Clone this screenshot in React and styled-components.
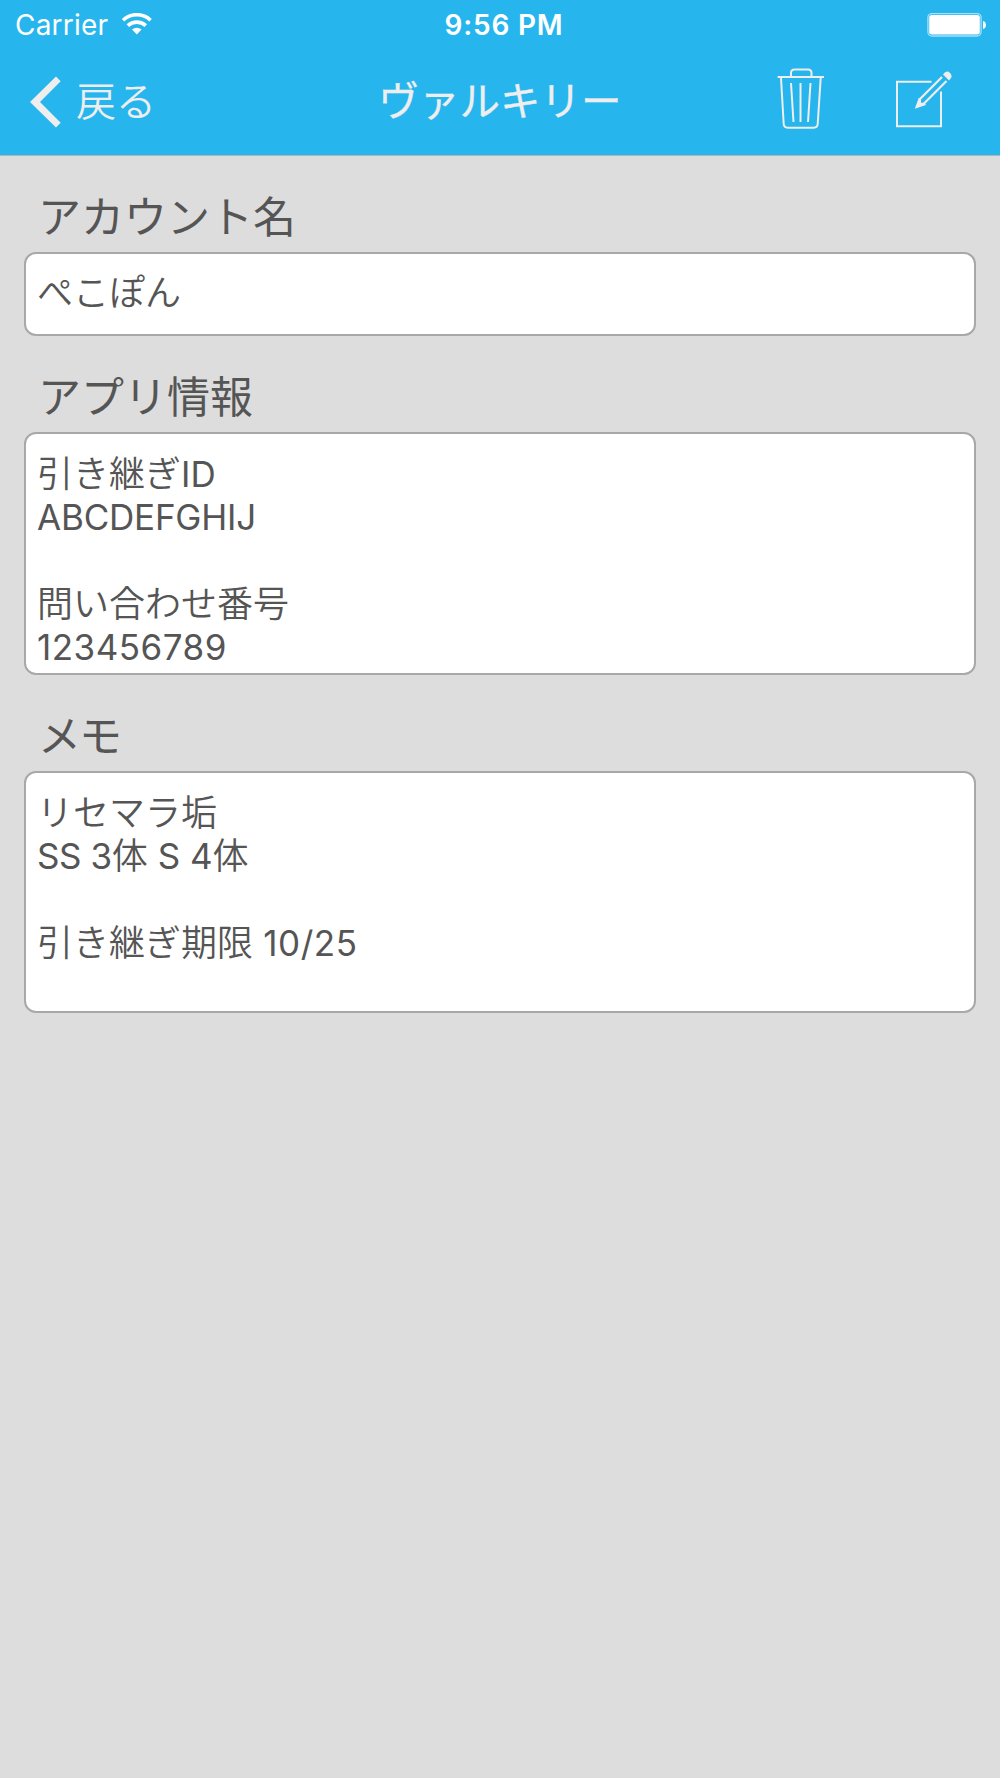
import styled, { createGlobalStyle } from 'styled-components'

const GlobalStyle = createGlobalStyle`
  * {
    box-sizing: border-box;
  }
  body {
    margin: 0;
    background: #ddd;
    font-family: "Noto Sans CJK JP", sans-serif;
    color: #555;
  }
`

const Screen = styled.div`
  min-height: 1778px;
  background: #ddd;
`

const Header = styled.header`
  height: 156px;
  background: #27b5ee;
  border-bottom: 1px solid #b4b4b8;
`

const StatusBar = styled.div`
  display: grid;
  grid-template-columns: 1fr auto 1fr;
  align-items: center;
  height: 50px;
  padding: 0 13px 0 15px;
  color: #fff;
  font-family: Inter, sans-serif;
`

const Carrier = styled.div`
  display: flex;
  align-items: center;
  gap: 14px;
  font-size: 28px;
  letter-spacing: 0.2px;

  svg {
    margin-top: -2px;
  }
`

const Clock = styled.div`
  padding-left: 6px;
  font-weight: 600;
  font-size: 28px;
  letter-spacing: 0.8px;
`

const Battery = styled.svg`
  justify-self: end;
`

const NavBar = styled.nav`
  display: grid;
  grid-template-columns: minmax(0, 1fr) auto minmax(0, 1fr);
  align-items: center;
  height: 105px;
  padding: 0 48px 7px;
  color: #eee;
`

const BackButton = styled.a`
  display: flex;
  align-items: center;
  gap: 15px;
  margin-left: -18px;
  font-size: 40px;
  line-height: 60px;
  font-weight: 350;

  svg {
    margin-top: 6px;
  }
`

const Title = styled.h1`
  margin: 0;
  font-size: 40.5px;
  font-weight: 400;
  line-height: 60px;
  -webkit-text-stroke: 0.3px #eee;
`

const Actions = styled.div`
  display: flex;
  align-items: center;
  justify-content: flex-end;
  gap: 71px;
`

const Form = styled.main`
  padding: 0 24px;
`

const Label = styled.h2`
  display: flex;
  align-items: center;
  height: 96px;
  margin: 0;
  padding: 19px 14px 0;
  font-size: 43px;
  line-height: 50px;
  font-weight: 400;
  letter-spacing: ${(props) => props.$spacing || 0}px;
`

const Box = styled.div`
  height: ${(props) => props.$height}px;
  padding: ${(props) => props.$top}px 11px 0;
  background: #fff;
  border: 2px solid #a8a8a8;
  border-radius: 12px;
  overflow: hidden;
`

const Line = styled.p`
  height: 43.2px;
  margin: 0;
  font-size: 36px;
  line-height: 43.2px;
  font-weight: 350;
  white-space: pre;
`

const Latin = styled.span`
  font-family: Inter, sans-serif;
  font-size: 35px;
  font-weight: 400;
  letter-spacing: ${(props) => props.$spacing || 0}px;
`

function WifiIcon() {
  return (
    <svg width="30" height="22" viewBox="121 13 30 22" fill="none" stroke="#fff">
      <path d="M122 20.2a20 20 0 0 1 27.6 0" strokeWidth="3.6" />
      <path d="M126.8 25.6a13.4 13.4 0 0 1 18 0" strokeWidth="3.6" />
      <path d="M131 29.6a7.6 7.6 0 0 1 9.6 0L135.8 34.6z" fill="#fff" stroke="none" />
    </svg>
  )
}

function BatteryIcon() {
  return (
    <Battery width="60" height="24" viewBox="927 13 60 24">
      <rect x="927.9" y="13.6" width="53.2" height="22.4" rx="4" fill="none" stroke="#a8e0f9" strokeWidth="1.3" />
      <rect x="929.2" y="15" width="50.6" height="19.6" rx="2.5" fill="#fff" />
      <path d="M983 21c4 .8 4 7.2 0 8z" fill="#fff" />
    </Battery>
  )
}

function BackIcon() {
  return (
    <svg width="31" height="52" viewBox="30 76 31 52">
      <path d="M56 76.5l4.7 4.7L40 102l20.7 20.8-4.7 4.7L30 102z" fill="#eee" />
    </svg>
  )
}

function TrashIcon() {
  return (
    <svg width="48" height="62" viewBox="777 68 48 62" fill="none" stroke="#eee" strokeWidth="2">
      <path d="M777.6 77H824" />
      <path d="M791 76v-3q0-3.5 3.5-3.5h13.5q3.5 0 3.5 3.5v3" />
      <path d="M781 78l2.7 46q.3 3.7 4 3.7h26q3.7 0 4-3.7l3-46" />
      <path d="M791 83l2.5 39M800.5 83v39M810.5 83l-2.5 39" />
    </svg>
  )
}

function ComposeIcon() {
  return (
    <svg width="56" height="57" viewBox="896 70.5 56 57" fill="none" stroke="#eee">
      <path d="M931.5 81.3H897v44.4h44V91" strokeWidth="2" />
      <path d="M942 76.5L919.5 99M946.5 80.5L924 103" strokeWidth="2.2" />
      <path d="M914.8 108.2l4-11 2.2 1.5v3.5h3.5l1.5 2.3z" fill="#eee" stroke="none" />
      <path d="M943 74q3.5-5 7-1.5t-1 7.5z" fill="#eee" stroke="none" />
    </svg>
  )
}

export default function App() {
  return (
    <Screen>
      <GlobalStyle />
      <Header>
        <StatusBar>
          <Carrier>
            Carrier
            <WifiIcon />
          </Carrier>
          <Clock>9:56 PM</Clock>
          <BatteryIcon />
        </StatusBar>
        <NavBar>
          <BackButton>
            <BackIcon />
            戻る
          </BackButton>
          <Title>ヴァルキリー</Title>
          <Actions>
            <TrashIcon />
            <ComposeIcon />
          </Actions>
        </NavBar>
      </Header>

      <Form>
        <Label>アカウント名</Label>
        <Box $height={84} $top={15}>
          <Line>ぺこぽん</Line>
        </Box>
        <Label>アプリ情報</Label>
        <Box $height={243} $top={16}>
          <Line>引き継ぎ<Latin>ID</Latin></Line>
          <Line><Latin $spacing={-0.2}>ABCDEFGHIJ</Latin></Line>
          <Line />
          <Line>問い合わせ番号</Line>
          <Line><Latin $spacing={0.5}>123456789</Latin></Line>
        </Box>
        <Label $spacing={-2}>メモ</Label>
        <Box $height={242} $top={16}>
          <Line>リセマラ垢</Line>
          <Line><Latin $spacing={-0.4}>SS 3</Latin>体<Latin> S 4</Latin>体</Line>
          <Line />
          <Line>引き継ぎ期限<Latin $spacing={0.5}> 10/25</Latin></Line>
        </Box>
      </Form>
    </Screen>
  )
}
